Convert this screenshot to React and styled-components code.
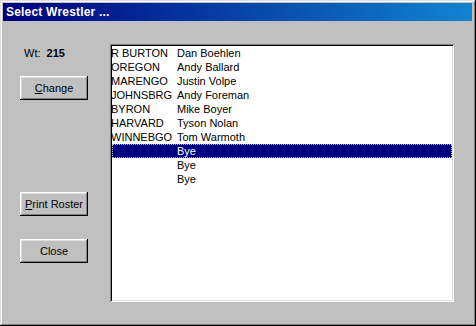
import styled, { createGlobalStyle } from "styled-components";

const rows = [
  { school: "R BURTON", name: "Dan Boehlen" },
  { school: "OREGON", name: "Andy Ballard" },
  { school: "MARENGO", name: "Justin Volpe" },
  { school: "JOHNSBRG", name: "Andy Foreman" },
  { school: "BYRON", name: "Mike Boyer" },
  { school: "HARVARD", name: "Tyson Nolan" },
  { school: "WINNEBGO", name: "Tom Warmoth" },
  { school: "", name: "Bye", selected: true },
  { school: "", name: "Bye" },
  { school: "", name: "Bye" },
];

const App = () => {
  return (
    <>
      <Global />
      <Window>
        <TitleBar>Select Wrestler ...</TitleBar>
        <Body>
          <Side>
            <Weight>
              Wt: <b>215</b>
            </Weight>
            <Button $top={16}>
              <u>C</u>hange
            </Button>
            <Button $top={92}>
              <u>P</u>rint Roster
            </Button>
            <Button $top={23}>Close</Button>
          </Side>
          <ListBox>
            {rows.map((r, idx) => (
              <Row key={idx} $selected={r.selected}>
                <School>{r.school}</School>
                <span>{r.name}</span>
              </Row>
            ))}
          </ListBox>
        </Body>
      </Window>
    </>
  );
};

// style
const Global = createGlobalStyle`
  html, body {
    margin: 0;
    padding: 0;
    background: #c0c0c0;
  }
`;

const Window = styled.div`
  width: 476px;
  height: 326px;
  box-sizing: border-box;
  background: #c0c0c0;
  padding: 3px 4px 3px 3px;
  box-shadow: inset -1px -1px 0 #000, inset 1px 1px 0 #dfdfdf,
    inset -2px -2px 0 #808080, inset 2px 2px 0 #fff;
  display: flex;
  flex-direction: column;
  font-family: "Liberation Sans", Arial, sans-serif;
  font-size: 11px;
  color: #000;
`;

const TitleBar = styled.div`
  height: 18px;
  line-height: 18px;
  padding-left: 3px;
  background: linear-gradient(to right, #000080, #1084d0);
  color: #fff;
  font-weight: bold;
  font-size: 12px;
  letter-spacing: 0.2px;
`;

const Body = styled.div`
  flex: 1;
  display: flex;
  padding: 23px 18px 21px 0;
`;

const Side = styled.div`
  width: 107px;
  display: flex;
  flex-direction: column;
  padding-left: 17px;
  box-sizing: border-box;
`;

const Weight = styled.div`
  height: 14px;
  line-height: 14px;
  margin-top: 2px;
  padding-left: 4px;
  b {
    margin-left: 3px;
  }
`;

const Button = styled.div`
  margin-top: ${(p) => p.$top}px;
  width: 68px;
  height: 24px;
  box-sizing: border-box;
  display: flex;
  align-items: center;
  justify-content: center;
  background: #c0c0c0;
  box-shadow: inset -1px -1px 0 #000, inset 1px 1px 0 #fff,
    inset -2px -2px 0 #808080, inset 2px 2px 0 #dfdfdf;
  u {
    text-decoration: underline;
  }
`;

const ListBox = styled.div`
  flex: 1;
  background: #fff;
  box-sizing: border-box;
  overflow: hidden;
  box-shadow: inset 1px 1px 0 #808080, inset -1px -1px 0 #fff,
    inset 2px 2px 0 #000, inset -2px -2px 0 #dfdfdf;
  padding: 2px;
`;

const Row = styled.div`
  display: flex;
  height: 14px;
  line-height: 14px;
  box-sizing: border-box;
  background: ${(p) => (p.$selected ? "#000080" : "transparent")};
  color: ${(p) => (p.$selected ? "#fff" : "#000")};
  outline: ${(p) => (p.$selected ? "1px dotted #c0c0a0" : "none")};
  outline-offset: -1px;
`;

const School = styled.span`
  width: 66px;
  margin-left: -1px;
  flex-shrink: 0;
  white-space: nowrap;
`;

export default App;
